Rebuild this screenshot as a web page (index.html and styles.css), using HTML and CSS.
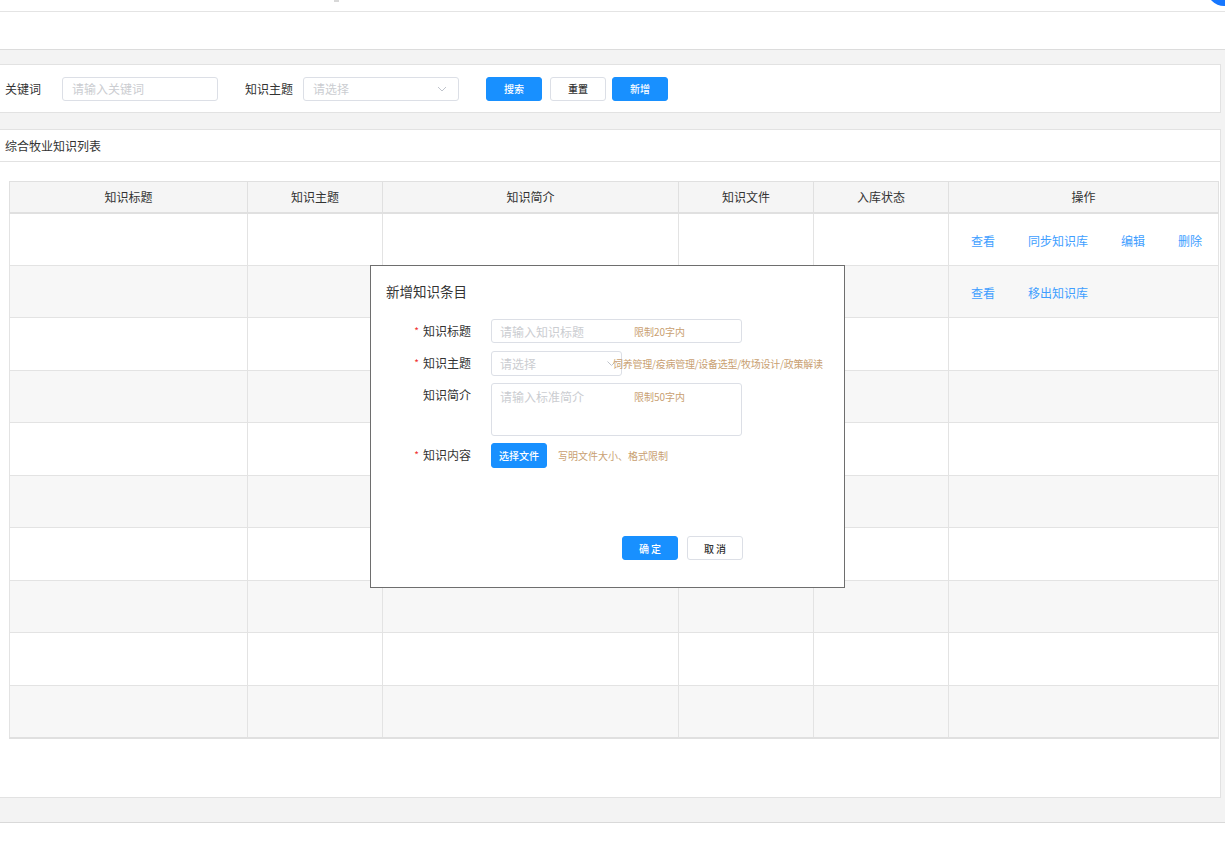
FILE: index.html
```html
<!DOCTYPE html>
<html lang="zh-CN">
<head>
<meta charset="utf-8">
<title>综合牧业知识列表</title>
<link rel="stylesheet" href="styles.css">
</head>
<body>
<div class="topbar"><span class="tb-mark"></span><span class="tb-avatar"></span></div>
<div class="header"></div>
<div class="main">
  <div class="card search-card">
    <span class="s-label">关键词</span>
    <div class="s-input in1"><span class="ph">请输入关键词</span></div>
    <span class="s-label lb2">知识主题</span>
    <div class="s-input in2"><span class="ph">请选择</span>
      <svg class="chev" width="10" height="6" viewBox="0 0 10 6"><path d="M1 1l4 4 4-4" fill="none" stroke="#c0c4cc" stroke-width="1"/></svg>
    </div>
    <button class="btn primary b1">搜索</button>
    <button class="btn b2">重置</button>
    <button class="btn primary b3">新增</button>
  </div>
  <div class="card list-card">
    <div class="list-title">综合牧业知识列表</div>
    <table class="tbl">
      <colgroup>
        <col class="c1"><col class="c2"><col class="c3"><col class="c4"><col class="c5"><col class="c6">
      </colgroup>
      <thead>
        <tr><th>知识标题</th><th>知识主题</th><th>知识简介</th><th>知识文件</th><th>入库状态</th><th>操作</th></tr>
      </thead>
      <tbody>
        <tr><td></td><td></td><td></td><td></td><td></td><td class="ops"><a>查看</a><a>同步知识库</a><a>编辑</a><a>删除</a></td></tr>
        <tr><td></td><td></td><td></td><td></td><td></td><td class="ops"><a>查看</a><a>移出知识库</a></td></tr>
        <tr><td></td><td></td><td></td><td></td><td></td><td></td></tr>
        <tr><td></td><td></td><td></td><td></td><td></td><td></td></tr>
        <tr><td></td><td></td><td></td><td></td><td></td><td></td></tr>
        <tr><td></td><td></td><td></td><td></td><td></td><td></td></tr>
        <tr><td></td><td></td><td></td><td></td><td></td><td></td></tr>
        <tr><td></td><td></td><td></td><td></td><td></td><td></td></tr>
        <tr><td></td><td></td><td></td><td></td><td></td><td></td></tr>
        <tr><td></td><td></td><td></td><td></td><td></td><td></td></tr>
      </tbody>
    </table>
  </div>
</div>

<div class="dialog">
  <div class="d-title">新增知识条目</div>
  <div class="d-form">
    <div class="d-row">
      <div class="d-label"><span class="req">*</span>知识标题</div>
      <div class="d-input w251"><span class="ph pw">请输入知识标题</span><span class="hint">限制20字内</span></div>
    </div>
    <div class="d-row">
      <div class="d-label"><span class="req">*</span>知识主题</div>
      <div class="d-input w131 h25"><span class="ph">请选择</span>
        <svg class="chev2" width="9" height="5" viewBox="0 0 9 5"><path d="M0.5 0.5l4 4 4-4" fill="none" stroke="#c0c4cc" stroke-width="1"/></svg>
      </div>
      <span class="hint hint-topic">饲养管理/疫病管理/设备选型/牧场设计/政策解读</span>
    </div>
    <div class="d-row">
      <div class="d-label">知识简介</div>
      <div class="d-input w251 area"><span class="ph pw">请输入标准简介</span><span class="hint">限制50字内</span></div>
    </div>
    <div class="d-row">
      <div class="d-label"><span class="req">*</span>知识内容</div>
      <button class="btn primary file-btn">选择文件</button>
      <span class="hint hint-file">写明文件大小、格式限制</span>
    </div>
  </div>
  <div class="d-footer">
    <button class="btn primary fb">确 定</button>
    <button class="btn fb fb2">取 消</button>
  </div>
</div>
</body>
</html>
```

FILE: styles.css
```css
* { box-sizing: border-box; }
html, body { margin: 0; padding: 0; background: #fff; }
body {
  font-family: "Noto Sans CJK SC", "Noto Sans", "Liberation Sans", sans-serif;
  font-size: 12px;
  color: #333;
  width: 1225px;
  height: 866px;
  overflow: hidden;
  position: relative;
}

.topbar {
  height: 12px;
  border-bottom: 1px solid #e4e4e4;
  display: flex;
  align-items: flex-start;
  overflow: hidden;
}
.tb-mark {
  width: 5px; height: 2px;
  background: #d8d8d8;
  margin-left: 334px;
}
.tb-avatar {
  width: 34px; height: 34px;
  border-radius: 50%;
  background: #1677ff;
  margin-left: auto;
  margin-top: -28px;
  margin-right: -16px;
}
.header {
  height: 38px;
  border-bottom: 1px solid #dcdcdc;
}

.main {
  background: #f3f3f3;
  padding: 14px 4px 24px 0;
  border-bottom: 1px solid #d9d9d9;
}
.card {
  background: #fff;
  border: 1px solid #e2e2e2;
  border-left: none;
}
.search-card {
  height: 49px;
  display: flex;
  align-items: center;
  padding-left: 5px;
}
.s-label { font-size: 12px; color: #333; line-height: 16px; }
.s-input {
  height: 24px;
  border: 1px solid #dcdfe6;
  border-radius: 3px;
  display: flex;
  align-items: center;
  padding: 0 9px;
  background: #fff;
}
.ph { color: #cbcdd1; font-size: 12px; white-space: nowrap; }
.in1 { width: 156px; margin-left: 21px; }
.lb2 { margin-left: 27px; }
.in2 { width: 156px; margin-left: 10px; }
.chev { margin-left: auto; margin-right: 2px; }

.btn {
  height: 24px;
  width: 56px;
  border: 1px solid #dcdfe6;
  border-radius: 3px;
  background: #fff;
  color: #333;
  font-family: inherit;
  font-size: 10px;
  font-weight: 500;
  padding: 0;
  display: inline-flex;
  align-items: center;
  justify-content: center;
}
.btn.primary { background: #1890ff; border-color: #1890ff; color: #fff; }
.b1 { margin-left: 27px; }
.b2 { margin-left: 8px; }
.b3 { margin-left: 6px; }

.list-card {
  margin-top: 16px;
  padding: 0 3px 58px 9px;
}
.list-title {
  height: 32px;
  margin-left: -9px;
  margin-right: -3px;
  padding-left: 5px;
  border-bottom: 1px solid #e2e2e2;
  display: flex;
  align-items: center;
  font-size: 12px;
  color: #333;
}
.tbl {
  margin-top: 19px;
  border-collapse: collapse;
  table-layout: fixed;
  width: 1209px;
}
.c1 { width: 238px; } .c2 { width: 135px; } .c3 { width: 296px; }
.c4 { width: 135px; } .c5 { width: 135px; } .c6 { width: 270px; }
.tbl th {
  height: 31px;
  background: #f5f5f5;
  font-weight: normal;
  font-size: 12px;
  color: #333;
  border: 1px solid #e0e0e0;
  border-bottom: 2px solid #e0e0e0;
  padding: 0;
}
.tbl td {
  height: 52.5px;
  border: 1px solid #e3e3e3;
  padding: 0;
}
.tbl tbody tr:nth-child(even) td { background: #f7f7f7; }
.tbl tbody tr:last-child td { border-bottom: 2px solid #e0e0e0; }
.ops { padding-left: 22px !important; padding-top: 2px !important; white-space: nowrap; }
.ops a { color: #409eff; font-size: 12px; margin-right: 33px; }

.dialog {
  position: absolute;
  left: 370px;
  top: 265px;
  width: 475px;
  height: 323px;
  background: #fff;
  border: 1px solid #6e6e6e;
}
.d-title {
  padding: 15px 0 0 15px;
  font-size: 13.5px;
  line-height: 20px;
  color: #333;
}
.d-form {
  margin-top: 18px;
  display: flex;
  flex-direction: column;
  gap: 7px;
}
.d-row { display: flex; align-items: flex-start; }
.d-label {
  width: 100px;
  margin-right: 20px;
  text-align: right;
  line-height: 24px;
  font-size: 12px;
  color: #333;
}
.req { color: #f0302e; font-size: 10px; margin-right: 4px; position: relative; top: -1px; }
.d-input {
  height: 24px;
  border: 1px solid #dcdfe6;
  border-radius: 3px;
  display: flex;
  align-items: center;
  padding: 0 8px;
}
.w251 { width: 251px; }
.w131 { width: 131px; }
.h25 { height: 25px; }
.pw { width: 134px; }
.hint { color: #c99f72; font-size: 10px; white-space: nowrap; }
.chev2 { margin-left: auto; margin-right: -3px; }
.hint-topic { margin-left: -9px; line-height: 25px; letter-spacing: -0.25px; }
.area { height: 53px; align-items: flex-start; padding-top: 4px; }
.area .hint { margin-top: 1px; }
.file-btn { width: 56px; height: 25px; }
.hint-file { margin-left: 11px; line-height: 25px; }

.d-footer {
  margin-top: 68px;
  display: flex;
  justify-content: flex-end;
  padding-right: 101px;
}
.fb { width: 56px; height: 24px; }
.fb2 { margin-left: 9px; }
```
